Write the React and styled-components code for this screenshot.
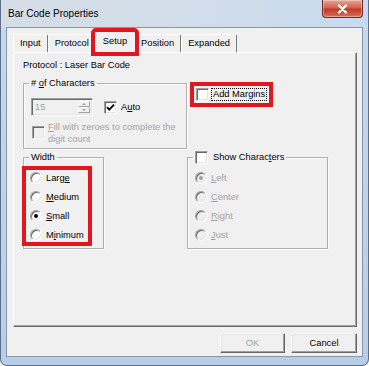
import React from 'react';
import styled, { createGlobalStyle } from 'styled-components';

const GlobalStyle = createGlobalStyle`
  html, body { margin: 0; padding: 0; }
  body { background: #fff; font-family: "Liberation Sans", Arial, sans-serif; }
  * { box-sizing: border-box; }
`;

const RED = '#e3161f';

const Window = styled.div`
  width: 369px;
  height: 366px;
  display: flex;
  flex-direction: column;
  background: linear-gradient(180deg, #c9d9ee 0%, #b8cde7 100%);
  border: 1px solid #5a6f8a;
  border-top: none;
  border-radius: 0 0 7px 7px;
  overflow: hidden;
`;

const TitleBar = styled.div`
  height: 27px;
  flex: none;
  display: flex;
  align-items: flex-start;
  justify-content: space-between;
  padding: 0 5px 0 7px;
  background: linear-gradient(90deg, #d6dde6 0%, #d2dde9 45%, #c8daef 100%);
`;

const Title = styled.div`
  margin-top: 8px;
  font-size: 10px;
  line-height: 12px;
  color: #000;
`;

const CloseButton = styled.div`
  width: 41px;
  height: 18px;
  display: flex;
  align-items: center;
  justify-content: center;
  border: 1px solid #6b2b22;
  border-top: none;
  border-radius: 0 0 4px 4px;
  background: linear-gradient(180deg, #e7a595 0%, #d0634f 45%, #c13a26 55%, #d8705a 100%);
  box-shadow: inset 0 0 0 1px rgba(255, 255, 255, 0.35);
`;

const Frame = styled.div`
  flex: 1;
  display: flex;
  padding: 0 5px 8px;
`;

const Client = styled.div`
  flex: 1;
  display: flex;
  flex-direction: column;
  border: 1px solid #8497ad;
  background: #f0f0f0;
  padding: 3px 5px 3px 6px;
  font-size: 9.3px;
  color: #000;
  white-space: nowrap;
`;

const TabStrip = styled.div`
  height: 21px;
  flex: none;
  display: flex;
  align-items: flex-end;
`;

const Tab = styled.div`
  position: relative;
  height: ${p => (p.$active ? '22px' : '18px')};
  margin: ${p => (p.$active ? '0 -2px -1px' : '0')};
  z-index: ${p => (p.$active ? 2 : 0)};
  padding: ${p => (p.$active ? '4px 8px 0' : '0 6px')};
  display: flex;
  align-items: ${p => (p.$active ? 'flex-start' : 'center')};
  line-height: 11px;
  background: #f0f0f0;
  border-style: solid;
  border-width: 1px 1px 0 1px;
  border-color: #fff #7a7a7a #fff #fff;
  border-radius: 2px 2px 0 0;
  outline: ${p => (p.$marked ? `4px solid ${RED}` : 'none')};
  outline-offset: -1px;
`;

const Pane = styled.div`
  flex: 1;
  border-style: solid;
  border-width: 1px;
  border-color: #fff #6d6d6d #6d6d6d #fff;
  box-shadow: inset -1px -1px 0 #a0a0a0;
  padding: 7px 9px 0 9px;
`;

const Text = styled.div`
  line-height: 11px;
  color: ${p => (p.$disabled ? '#a3a3a3' : '#000')};
`;

const Row = styled.div`
  display: flex;
  align-items: flex-start;
  margin-top: ${p => p.$top || 0}px;
`;

const Group = styled.fieldset`
  width: ${p => p.$w}px;
  margin: 0 0 0 ${p => p.$left || 0}px;
  padding: 0;
  min-width: 0;
  border: 1px solid #b0b0b0;
  box-shadow: inset 1px 1px 0 #fff, 1px 1px 0 #fff;
`;

const Legend = styled.legend`
  height: 13px;
  margin-left: 5px;
  padding: 0 2px;
  display: flex;
  align-items: center;
  gap: 5px;
  line-height: 11px;
`;

const GroupBody = styled.div`
  padding: ${p => p.$pad};
`;

const SpinRow = styled.div`
  display: flex;
  align-items: center;
  height: 18px;
`;

const SpinBox = styled.div`
  width: 62px;
  height: 18px;
  display: flex;
  border-style: solid;
  border-width: 1px;
  border-color: #a0a0a0 #fff #fff #a0a0a0;
  box-shadow: inset 1px 1px 0 #696969, inset -1px -1px 0 #e3e3e3;
  background: #f0f0f0;
  padding: 2px 2px 2px 3px;
`;

const SpinValue = styled.div`
  flex: 1;
  color: #a3a3a3;
  line-height: 12px;
`;

const SpinButtons = styled.div`
  width: 12px;
  display: flex;
  flex-direction: column;
`;

const SpinButton = styled.div`
  flex: 1;
  display: flex;
  align-items: center;
  justify-content: center;
  border-style: solid;
  border-width: 1px;
  border-color: #fff #a0a0a0 #a0a0a0 #fff;
  &::after {
    content: '';
    border-left: 2px solid transparent;
    border-right: 2px solid transparent;
    border-${p => (p.$up ? 'bottom' : 'top')}: 2px solid #a0a0a0;
  }
`;

const Check = styled.label`
  display: flex;
  align-items: ${p => (p.$wrap ? 'flex-start' : 'center')};
  gap: ${p => p.$gap ?? 4}px;
  margin-left: ${p => p.$left || 0}px;
  margin-top: ${p => p.$top || 0}px;
  color: ${p => (p.$disabled ? '#a3a3a3' : '#000')};
  line-height: 11px;
`;

const Box = styled.span`
  flex: none;
  width: 13px;
  height: 13px;
  display: flex;
  align-items: center;
  justify-content: center;
  margin-top: ${p => p.$top || 0}px;
  border-style: solid;
  border-width: 1px;
  border-color: #a0a0a0 #fff #fff #a0a0a0;
  box-shadow: inset 1px 1px 0 #696969, inset -1px -1px 0 #e3e3e3;
  background: ${p => (p.$disabled ? '#f0f0f0' : '#fff')};
`;

const FillText = styled.span`
  display: flex;
  flex-direction: column;
  line-height: 11.5px;
`;

const Marked = styled.div`
  display: flex;
  align-items: center;
  margin-left: ${p => p.$left || 0}px;
  margin-top: ${p => p.$top || 0}px;
  padding: ${p => p.$pad || 0};
  outline: 4px solid ${RED};
`;

const Focus = styled.span`
  border: 1px dotted #000;
  padding: 0 1px;
  line-height: 11px;
`;

const RadioList = styled.div`
  width: ${p => (p.$w ? `${p.$w}px` : 'auto')};
  padding-left: ${p => p.$left}px;
  outline: ${p => (p.$marked ? `4px solid ${RED}` : 'none')};
  outline-offset: -2px;
`;

const Radio = styled.div`
  height: 19px;
  display: flex;
  align-items: center;
  gap: 4px;
  color: ${p => (p.$disabled ? '#a3a3a3' : '#000')};
`;

const Dot = styled.span`
  flex: none;
  width: 12px;
  height: 12px;
  border-radius: 50%;
  display: flex;
  align-items: center;
  justify-content: center;
  border: 1px solid;
  border-color: #a0a0a0 #fff #fff #a0a0a0;
  box-shadow: inset 1px 1px 0 #696969, inset -1px -1px 0 #e3e3e3;
  background: ${p => (p.$disabled ? '#f0f0f0' : '#fff')};
  &::after {
    content: '';
    display: ${p => (p.$on ? 'block' : 'none')};
    width: 4px;
    height: 4px;
    border-radius: 50%;
    background: ${p => (p.$disabled ? '#a0a0a0' : '#000')};
  }
`;

const ButtonRow = styled.div`
  flex: none;
  display: flex;
  justify-content: flex-end;
  gap: 6px;
  margin-top: 6px;
`;

const Button = styled.div`
  width: ${p => p.$w}px;
  height: 20px;
  display: flex;
  align-items: center;
  justify-content: center;
  border-style: solid;
  border-width: 1px;
  border-color: #fff #696969 #696969 #fff;
  box-shadow: inset -1px -1px 0 #a0a0a0, inset 1px 1px 0 #e3e3e3;
  color: ${p => (p.$disabled ? '#a3a3a3' : '#000')};
`;

const CheckMark = () => (
  <svg width="9" height="9" viewBox="0 0 9 9">
    <path d="M1 4.2 L3.3 6.6 L8 1.6" fill="none" stroke="#000" strokeWidth="1.9" />
  </svg>
);

const tabs = ['Input', 'Protocol', 'Setup', 'Position', 'Expanded'];

const widths = [
  [<>Larg<u>e</u></>, false],
  [<><u>M</u>edium</>, false],
  [<><u>S</u>mall</>, true],
  [<>M<u>i</u>nimum</>, false],
];

const aligns = [
  [<><u>L</u>eft</>, true],
  [<><u>C</u>enter</>, false],
  [<><u>R</u>ight</>, false],
  [<><u>J</u>ust</>, false],
];

export default function App() {
  return (
    <>
      <GlobalStyle />
      <Window>
        <TitleBar>
          <Title>Bar Code Properties</Title>
          <CloseButton>
            <svg width="11" height="10" viewBox="0 0 11 10">
              <path d="M2 1.5 L9 8.5 M9 1.5 L2 8.5" stroke="#fff" strokeWidth="2.4" strokeLinecap="round" />
            </svg>
          </CloseButton>
        </TitleBar>
        <Frame>
          <Client>
            <TabStrip>
              {tabs.map(t => (
                <Tab key={t} $active={t === 'Setup'} $marked={t === 'Setup'}>{t}</Tab>
              ))}
            </TabStrip>
            <Pane>
              <Text>Protocol : Laser Bar Code</Text>
              <Row $top={6}>
                <Group $w={164}>
                  <Legend><span># <u>o</u>f Characters</span></Legend>
                  <GroupBody $pad="8px 4px 3px 7px">
                    <SpinRow>
                      <SpinBox>
                        <SpinValue>15</SpinValue>
                        <SpinButtons>
                          <SpinButton $up />
                          <SpinButton />
                        </SpinButtons>
                      </SpinBox>
                      <Check $left={11}>
                        <Box><CheckMark /></Box>
                        <span>A<u>u</u>to</span>
                      </Check>
                    </SpinRow>
                    <Check $wrap $disabled $top={6} $left={1} $gap={3}>
                      <Box $disabled $top={4} />
                      <FillText>
                        <span><u>F</u>ill with zeroes to complete the</span>
                        <span>digit count</span>
                      </FillText>
                    </Check>
                  </GroupBody>
                </Group>
                <Marked $left={7} $top={9} $pad="2px 2px 2px 2px">
                  <Check $gap={2}>
                    <Box />
                    <Focus>Add Margins</Focus>
                  </Check>
                </Marked>
              </Row>
              <Row $top={2}>
                <Group $w={81}>
                  <Legend><span>Width</span></Legend>
                  <GroupBody $pad="4px 0 4px 0">
                    <RadioList $left={6} $w={66} $marked>
                      {widths.map(([label, on], i) => (
                        <Radio key={i}>
                          <Dot $on={on} />
                          <span>{label}</span>
                        </Radio>
                      ))}
                    </RadioList>
                  </GroupBody>
                </Group>
                <Group $w={141} $left={83}>
                  <Legend>
                    <Box />
                    <span>Show Charac<u>t</u>ers</span>
                  </Legend>
                  <GroupBody $pad="4px 0 4px 0">
                    <RadioList $left={7}>
                      {aligns.map(([label, on], i) => (
                        <Radio key={i} $disabled>
                          <Dot $on={on} $disabled />
                          <span>{label}</span>
                        </Radio>
                      ))}
                    </RadioList>
                  </GroupBody>
                </Group>
              </Row>
            </Pane>
            <ButtonRow>
              <Button $w={65} $disabled>OK</Button>
              <Button $w={66}>Cancel</Button>
            </ButtonRow>
          </Client>
        </Frame>
      </Window>
    </>
  );
}
